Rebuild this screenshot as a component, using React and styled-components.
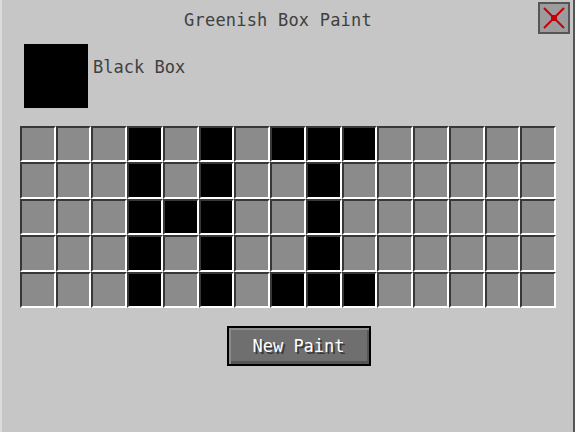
import React, { useState } from "react";
import styled, { createGlobalStyle } from "styled-components";

const ROWS = [
  [3, 5, 7, 8, 9],
  [3, 5, 8],
  [3, 4, 5, 8],
  [3, 5, 8],
  [3, 5, 7, 8, 9],
];
const COLS = 15;

const App = () => {
  const [cells, setCells] = useState(() =>
    ROWS.map((row) => Array.from({ length: COLS }, (_, c) => row.includes(c)))
  );

  const toggle = (r, c) => {
    setCells((prev) =>
      prev.map((row, ri) => (ri === r ? row.map((v, ci) => (ci === c ? !v : v)) : row))
    );
  };

  const reset = () => {
    setCells(ROWS.map(() => Array.from({ length: COLS }, () => false)));
  };

  return (
    <>
      <GlobalStyle />
      <Window>
        <Header>
          <span />
          <Title>Greenish Box Paint</Title>
          <CloseButton aria-label="Close">
            <svg width="26" height="26" viewBox="0 0 26 26">
              <path d="M3 3 L23 23 M23 3 L3 23" stroke="#c4000b" strokeWidth="2" />
              <rect x="10" y="10" width="6" height="6" fill="#c4000b" />
            </svg>
          </CloseButton>
        </Header>

        <SwatchRow>
          <Swatch $color="#000" />
          <SwatchLabel>Black Box</SwatchLabel>
        </SwatchRow>

        <Grid>
          {cells.map((row, r) =>
            row.map((on, c) => (
              <Cell key={`${r}-${c}`} $on={on} onClick={() => toggle(r, c)} />
            ))
          )}
        </Grid>

        <Footer>
          <NewPaintButton onClick={reset}>New Paint</NewPaintButton>
        </Footer>
      </Window>
    </>
  );
};

export default App;

const GlobalStyle = createGlobalStyle`
  html, body {
    margin: 0;
    padding: 0;
    background: #c6c6c6;
  }
  * {
    box-sizing: border-box;
  }
`;

const Window = styled.div`
  width: 575px;
  height: 432px;
  background: #c6c6c6;
  border-left: 2px solid #dcdcdc;
  border-right: 2px solid #555555;
  display: flex;
  flex-direction: column;
  font-family: "DejaVu Sans Mono", "Liberation Mono", monospace;
  overflow: hidden;
`;

const Header = styled.div`
  display: grid;
  grid-template-columns: 1fr auto 1fr;
  align-items: start;
  height: 44px;
  padding: 2px 3px 0 0;
`;

const Title = styled.div`
  font-size: 17px;
  line-height: 17px;
  color: #404040;
  padding: 10px 16px 0 0;
  letter-spacing: 0.2px;
`;

const CloseButton = styled.button`
  justify-self: end;
  width: 32px;
  height: 32px;
  padding: 0;
  background: #9c9c9c;
  border: 2px solid #555555;
  display: flex;
  align-items: center;
  justify-content: center;
  cursor: pointer;
`;

const SwatchRow = styled.div`
  display: flex;
  align-items: flex-start;
  gap: 5px;
  padding-left: 22px;
`;

const Swatch = styled.div`
  width: 64px;
  height: 64px;
  background: ${(p) => p.$color};
`;

const SwatchLabel = styled.div`
  font-size: 17px;
  line-height: 17px;
  color: #404040;
  margin-top: 15px;
`;

const Grid = styled.div`
  display: grid;
  grid-template-columns: repeat(15, 1fr);
  grid-template-rows: repeat(5, 1fr);
  width: 536px;
  height: 182px;
  margin: 18px 0 0 18px;
`;

const Cell = styled.div`
  background: ${(p) => (p.$on ? "#000000" : "#8b8b8b")};
  border-top: 2px solid #373737;
  border-left: 2px solid #373737;
  border-bottom: 2px solid #ffffff;
  border-right: 2px solid #ffffff;
  cursor: pointer;
`;

const Footer = styled.div`
  display: flex;
  justify-content: center;
  padding: 18px 0 0 22px;
`;

const NewPaintButton = styled.button`
  width: 144px;
  height: 40px;
  background: #6f6f6f;
  border: 2px solid #000000;
  box-shadow: inset 2px 2px 0 #8c8c8c, inset -2px -3px 0 #555555;
  color: #ffffff;
  font-family: "DejaVu Sans Mono", "Liberation Mono", monospace;
  font-size: 17px;
  text-shadow: 2px 2px 0 #383838;
  cursor: pointer;
  padding: 0;
`;
